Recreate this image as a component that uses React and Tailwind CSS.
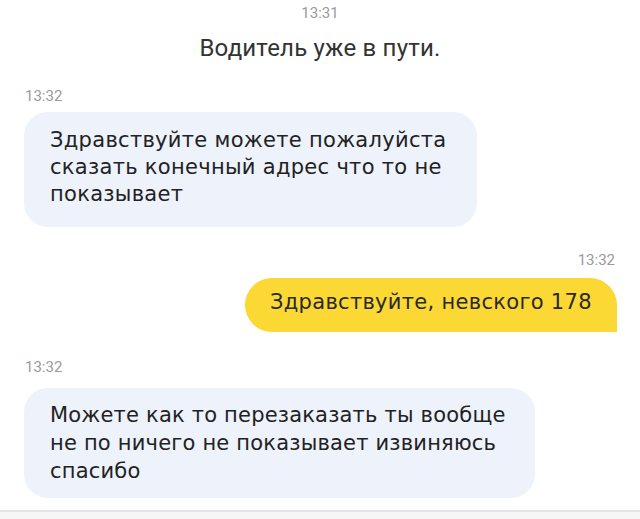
export default function App() {
  return (
    <div className="w-[640px] h-[519px] bg-white overflow-hidden flex flex-col text-[#222] font-['DejaVu_Sans','Noto_Sans',sans-serif]">
      <div className="flex flex-col items-center pt-[4px] font-['Roboto','Noto_Sans',sans-serif]">
        <div className="text-[15px] leading-[18px] text-[#9a9a9a]">13:31</div>
        <div className="mt-[13px] text-[24px] leading-[26px] tracking-[0.2px] text-[#333]">Водитель уже в пути.</div>
      </div>
      <div className="mt-[26px] pl-[25px] text-[15px] leading-[18px] text-[#9a9a9a] font-['Roboto','Noto_Sans',sans-serif]">13:32</div>
      <div className="mt-[7px] ml-[24px] w-[453px] rounded-[24px] bg-[#edf2fb] pl-[26px] pt-[15px] pb-[19px] text-[21px] leading-[27px] tracking-[0.3px]">
        Здравствуйте можете пожалуйста
        <br />
        сказать конечный адрес что то не
        <br />
        показывает
      </div>
      <div className="mt-[24px] pr-[25px] self-end text-[15px] leading-[18px] text-[#9a9a9a] font-['Roboto','Noto_Sans',sans-serif]">13:32</div>
      <div className="mt-[9px] mr-[23px] self-end w-[372px] h-[54px] flex items-center rounded-[27px] rounded-br-none bg-[#fcd835] pl-[25px] pb-[6px] text-[21px] leading-[28px] tracking-[0.3px] text-[#2a2a2a]">
        Здравствуйте, невского 178
      </div>
      <div className="mt-[26px] pl-[25px] text-[15px] leading-[18px] text-[#9a9a9a] font-['Roboto','Noto_Sans',sans-serif]">13:32</div>
      <div className="mt-[12px] ml-[24px] w-[511px] rounded-[24px] bg-[#edf2fb] pl-[26px] py-[13px] text-[21px] leading-[28px] tracking-[0.2px]">
        Можете как то перезаказать ты вообще
        <br />
        не по ничего не показывает извиняюсь
        <br />
        спасибо
      </div>
      <div className="mt-[12px] h-[2px] bg-[#e4e4e4]" />
      <div className="flex-1 bg-[#f6f6f6]" />
    </div>
  );
}
